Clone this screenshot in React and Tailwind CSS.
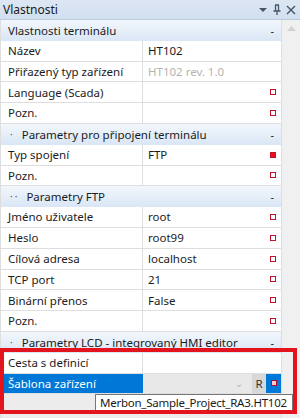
import React from 'react';

const rows = [
  { type: 'cat', label: 'Vlastnosti terminálu', level: 0 },
  { label: 'Název', value: 'HT102' },
  { label: 'Přiřazený typ zařízení', value: 'HT102 rev. 1.0', disabled: true },
  { label: 'Language (Scada)', value: '', mark: 'empty' },
  { label: 'Pozn.', value: '', mark: 'empty' },
  { type: 'cat', label: 'Parametry pro připojení terminálu', level: 1 },
  { label: 'Typ spojení', value: 'FTP', mark: 'full' },
  { label: 'Pozn.', value: '', mark: 'empty' },
  { type: 'cat', label: 'Parametry FTP', level: 2 },
  { label: 'Jméno uživatele', value: 'root', mark: 'empty' },
  { label: 'Heslo', value: 'root99', mark: 'empty' },
  { label: 'Cílová adresa', value: 'localhost', mark: 'empty' },
  { label: 'TCP port', value: '21', mark: 'empty' },
  { label: 'Binární přenos', value: 'False', mark: 'empty' },
  { label: 'Pozn.', value: '', mark: 'empty' },
  { type: 'cat', label: 'Parametry LCD - integrovaný HMI editor', level: 1 },
  { label: 'Cesta s definicí', value: '' },
];

const Mark = ({ kind }) => {
  if (!kind) return null;
  return (
    <span
      className={
        'block w-[6px] h-[6px] border border-[#c4102c] ' +
        (kind === 'full' ? 'bg-[#e8101c]' : 'bg-white')
      }
    />
  );
};

const Category = ({ label, level }) => (
  <div className="h-[20.8px] flex items-center bg-gradient-to-b from-[#f3f7fc] to-[#d9e6f5] pl-[7px] pr-[7px]">
    {level > 0 && (
      <span className="text-[#555] mr-[7px] tracking-[2px] text-[10px] pl-[2px]">
        {level === 1 ? '·' : '··'}
      </span>
    )}
    <span className="flex-1 truncate">{label}</span>
    <span className="text-[11px] leading-none">-</span>
  </div>
);

const Row = ({ label, value, disabled, mark }) => (
  <div className="h-[20.8px] flex border-b border-[#dedede]">
    <div className="w-[142px] shrink-0 flex items-center pl-[7px] border-r border-[#dedede]">
      {label}
    </div>
    <div className="flex-1 flex items-center pl-[5px] pr-[5px]">
      <span className={'flex-1 ' + (disabled ? 'text-[#b4b4b4]' : '')}>{value}</span>
      <Mark kind={mark} />
    </div>
  </div>
);

export default function App() {
  return (
    <div
      className="relative w-[300px] h-[418px] overflow-hidden bg-white text-[11.5px] text-[#1b1b1b] flex flex-col"
      style={{ fontFamily: '"Noto Sans", "Open Sans", sans-serif' }}
    >
      {/* title bar */}
      <div className="h-[20px] shrink-0 flex items-center bg-gradient-to-b from-[#dde7f3] to-[#d2dff0] border-b border-[#b9c9de] pl-[3px] pr-[4px]">
        <span className="flex-1 text-[12px]">Vlastnosti</span>
        <svg width="10" height="10" viewBox="0 0 10 10" className="mr-[4px]">
          <path d="M1 3 H9 L5 7 Z" fill="#44546a" />
        </svg>
        <svg width="10" height="12" viewBox="0 0 10 12" className="mr-[4px]">
          <path d="M3 1 H7 M3.5 1 V7 M6.5 1 V7 M1.5 7 H8.5 M5 7 V11" stroke="#44546a" strokeWidth="1.3" fill="none" />
        </svg>
        <svg width="10" height="10" viewBox="0 0 10 10">
          <path d="M1 1 L9 9 M9 1 L1 9" stroke="#44546a" strokeWidth="1.4" />
        </svg>
      </div>

      <div className="flex flex-1">
        <div className="w-[282px] border-l border-r border-[#dedede]">
          {rows.map((r, i) =>
            r.type === 'cat' ? (
              <Category key={i} label={r.label} level={r.level} />
            ) : (
              <Row key={i} {...r} />
            )
          )}
          {/* selected row */}
          <div className="h-[20.8px] flex border-b border-[#dedede]">
            <div className="w-[142px] shrink-0 flex items-center pl-[7px] bg-[#0078d7] text-white">
              Šablona zařízení
            </div>
            <div className="flex-1 flex items-stretch bg-[#e8e8e8]">
              <span className="flex-1 flex items-center justify-end pr-[9px] text-[#b8b8b8] text-[10px]">⌄</span>
              <span className="w-[14px] flex items-center justify-center bg-[#d8d8d8] text-[#333]">R</span>
              <span className="w-[15px] flex items-center justify-center bg-[#0078d7]">
                <span className="block w-[6px] h-[6px] border border-[#a0102c] bg-[#f4c8d4]" />
              </span>
            </div>
          </div>
          <div className="h-[30px] bg-[#ececec]" />
        </div>
        <div className="w-[18px] bg-[#f0f0f0] flex justify-center pt-[6px]">
          <svg width="9" height="5" viewBox="0 0 9 5">
            <path d="M0 5 L4.5 0 L9 5 Z" fill="#d2d2d2" />
          </svg>
        </div>
      </div>

      {/* dropdown popup */}
      <div className="absolute left-[95px] top-[394px] w-[198px] h-[18px] bg-white border border-[#767676] flex items-center pl-[4px] text-[11.5px] tracking-[-0.25px] whitespace-nowrap">
        Merbon_Sample_Project_RA3.HT102
      </div>

      {/* red highlight annotation */}
      <div className="absolute left-0 top-[348px] w-[297px] h-[66px] border-[4px] border-[#e3141e] pointer-events-none" />
    </div>
  );
}
